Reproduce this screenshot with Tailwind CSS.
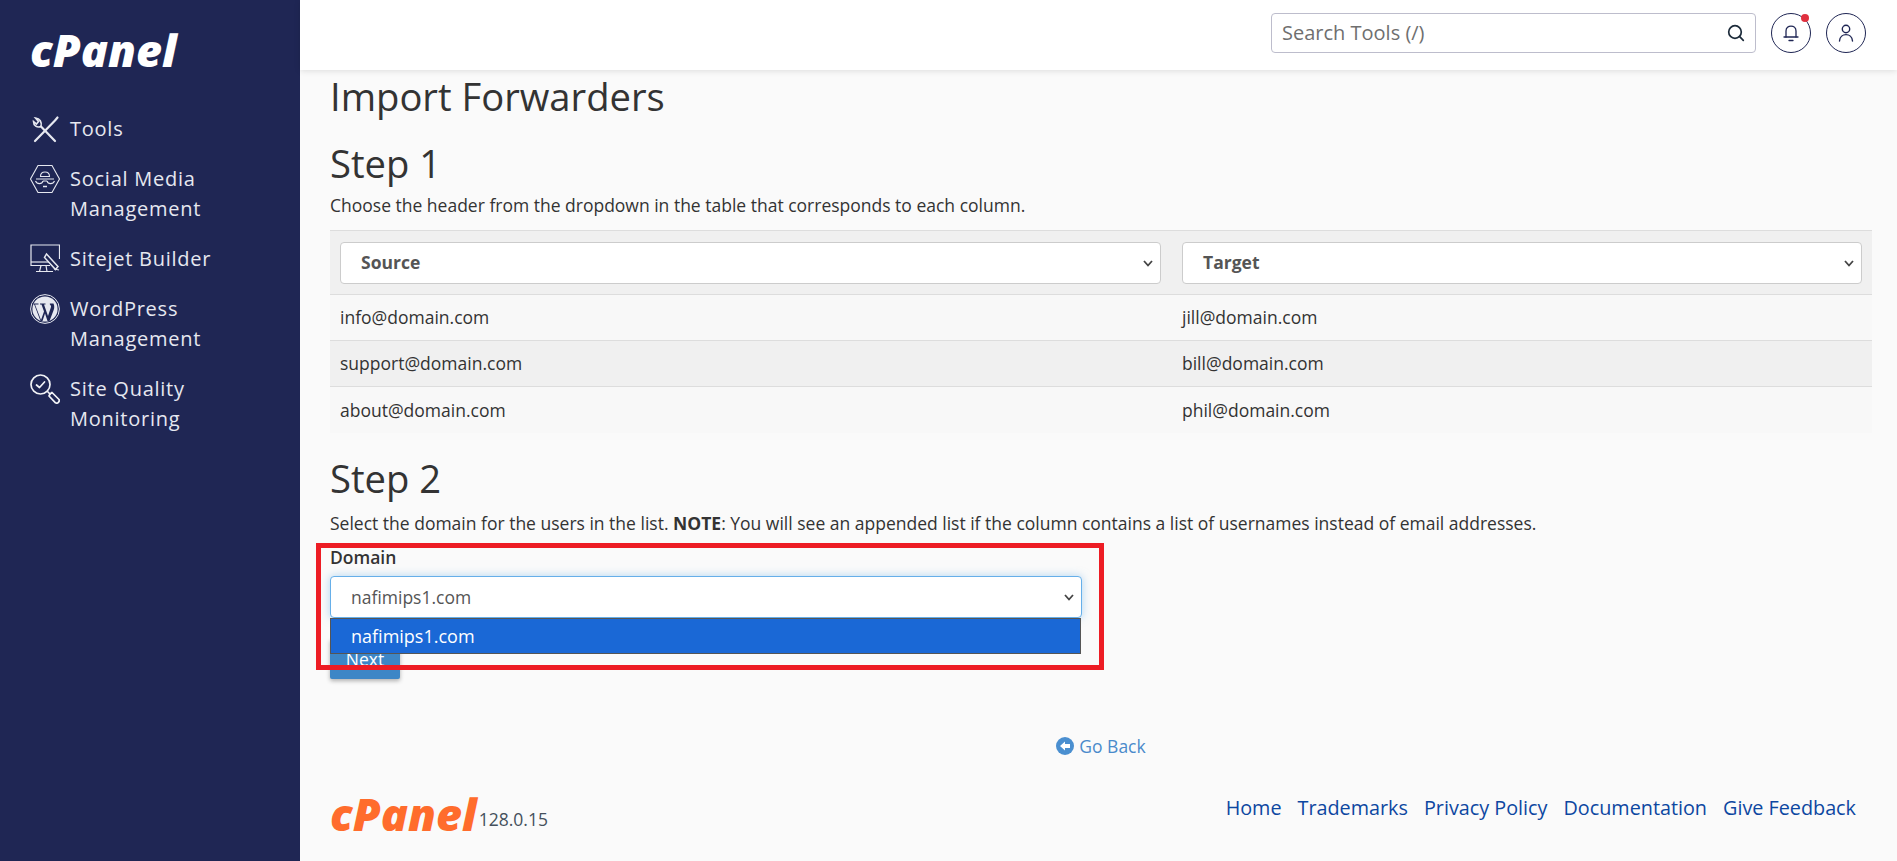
<!DOCTYPE html>
<html>

<head>
    <meta charset="utf-8">
    <title>Import Forwarders - cPanel</title>
    <script src="https://cdn.jsdelivr.net/npm/@tailwindcss/browser@4"></script>
</head>

<body class="bg-[#fafafa] text-[#333] font-['Open_Sans',sans-serif] h-[861px] overflow-hidden">

    <div class="flex h-[861px]">

        <!-- sidebar -->
        <aside class="w-[300px] shrink-0 bg-[#1f2654] text-[#e6e8f0] pl-[30px]">
            <div class="h-[30px] mt-[35px] mb-[49px] text-white font-extrabold italic text-[45px] leading-[30px] tracking-[0px]">cPanel</div>

            <nav class="flex flex-col gap-5 text-[20px] leading-[30px] tracking-[0.75px]">
                <a class="flex gap-2.5 items-start">
                    <svg class="w-[30px] h-[30px] shrink-0" viewBox="0 0 30 30" fill="none" stroke="#e6e8f0" stroke-width="2.2" stroke-linecap="round">
                        <path d="M5 27 L25 6.5 M25 6.5 L27.5 3.5" />
                        <path d="M25 27 L11 12.5" />
                        <path d="M11 12.5 C12 8 10 4.5 5.5 4 L8.5 7.5 L6.5 10 L3.5 7.5 C3.5 11.5 7 14 11 12.5Z" stroke-width="1.6" />
                    </svg>
                    <span>Tools</span>
                </a>
                <a class="flex gap-2.5 items-start">
                    <svg class="w-[30px] h-[30px] shrink-0" viewBox="0 0 30 30" fill="none" stroke="#e6e8f0" stroke-width="1.1">
                        <path d="M8 1.5 H22 L29.5 15 L22 28.5 H8 L0.5 15Z" />
                        <path d="M10.5 12.5 C10.5 6.5 19.5 6.5 19.5 12.5Z" />
                        <path d="M6 15 H24 M5.5 17 C7 20.5 12 20.5 13 17 M17 17 C18 20.5 23 20.5 24.5 17 M13 17 H17" />
                        <path d="M13 22.5 H17" stroke-width="1.5" />
                    </svg>
                    <span>Social Media<br>Management</span>
                </a>
                <a class="flex gap-2.5 items-start">
                    <svg class="w-[30px] h-[30px] shrink-0" viewBox="0 0 30 30" fill="none" stroke="#e6e8f0" stroke-width="1.2">
                        <path d="M20 21.5 H1 V1 H29.5 V15" />
                        <path d="M1 18 H19" />
                        <path d="M11 21.5 L9.5 27.5 M16 21.5 L17 27.5 M6 27.5 H23" />
                        <path d="M16.5 10 L28 22.5 L25.5 25.5 L14.5 13.5Z" stroke-width="1.5" />
                        <path d="M24 25 L29 26" />
                    </svg>
                    <span>Sitejet Builder</span>
                </a>
                <a class="flex gap-2.5 items-start">
                    <svg class="w-[30px] h-[30px] shrink-0" viewBox="0 0 30 30">
                        <circle cx="15" cy="15" r="14.4" fill="none" stroke="#e6e8f0" stroke-width="1" />
                        <circle cx="15" cy="15" r="12.6" fill="#e6e8f0" />
                        <path d="M5 10.5 L11 26 L14 17.5 L11.5 10.5 H10 V9.5 H15.5 V10.5 H14 L18 22 L21 13 C21.5 11 19 10.5 20 9.5 H23.5 C24.5 12 24.5 14 23.5 16.5 L19.5 27 H17.5 L15 19.5 L12.5 27 H10.5 L4.2 10.5 H3.5 V9.5 H8.5 V10.5Z" fill="#1f2654" />
                    </svg>
                    <span>WordPress<br>Management</span>
                </a>
                <a class="flex gap-2.5 items-start">
                    <svg class="w-[30px] h-[30px] shrink-0" viewBox="0 0 30 30" fill="none" stroke="#f2f3f7" stroke-width="1.7" stroke-linecap="round" stroke-linejoin="round">
                        <circle cx="10.5" cy="10.5" r="9.5" />
                        <path d="M6.5 11 L9.5 13.5 L14.5 8" />
                        <path d="M18 18 L20 20" />
                        <path d="M20 20 L22 18.5 L29 25.5 C30 27.5 27.5 30 25.5 28.8 L19 22Z" />
                    </svg>
                    <span>Site Quality<br>Monitoring</span>
                </a>
            </nav>
        </aside>

        <div class="flex-1 min-w-0 flex flex-col">

            <!-- top bar -->
            <header class="h-[70px] shrink-0 bg-white shadow-[0_1px_6px_rgba(0,0,0,0.12)] flex items-start pt-[13px] justify-end gap-[15px] pr-[31px] relative z-10">
                <div class="w-[485px] h-10 border border-[#bdbdcc] rounded-[4px] flex items-center justify-between pl-2.5 pr-2.5 text-[20px] text-[#6f6f6f]">
                    <span>Search Tools (/)</span>
                    <svg class="w-[18px] h-[18px]" viewBox="0 0 18 18" fill="none" stroke="#1c2b3a" stroke-width="1.7" stroke-linecap="round">
                        <circle cx="8" cy="8" r="6.3" />
                        <path d="M12.7 12.7 L16.3 16.3" />
                    </svg>
                </div>
                <div class="relative w-10 h-10 rounded-full border border-[#1f2654] flex items-center justify-center">
                    <svg class="w-4 h-[18px]" viewBox="0 0 16 18" fill="none" stroke="#1f2654" stroke-width="1.3" stroke-linecap="round">
                        <path d="M3 13 V7 C3 0.5 13 0.5 13 7 V13" />
                        <path d="M1 13 H15 M6 16.5 H10" />
                    </svg>
                    <span class="absolute top-0 right-[1px] w-2 h-2 rounded-full bg-[#e0303f]"></span>
                </div>
                <div class="w-10 h-10 rounded-full border border-[#1f2654] flex items-center justify-center">
                    <svg class="w-4 h-[18px]" viewBox="0 0 16 18" fill="none" stroke="#1f2654" stroke-width="1.4" stroke-linecap="round">
                        <circle cx="8" cy="5" r="3.7" />
                        <path d="M1.5 17 C2 8.5 14 8.5 14.5 17" />
                    </svg>
                </div>
            </header>

            <main class="flex-1 pl-[30px] pr-[25px] flex flex-col">
                <h1 class="text-[38.2px] leading-[44px] mt-[4px]">Import Forwarders</h1>

                <h2 class="text-[38.2px] leading-[44px] mt-[23px]">Step 1</h2>
                <p class="text-[17.5px] leading-6 mt-[8px] mb-[13px]">Choose the header from the dropdown in the table that corresponds to each column.</p>

                <div class="border-t border-[#ddd] text-[17.5px] text-[#333]">
                    <div class="grid grid-cols-[852px_1fr] bg-[#f0f0f0] h-[64px] border-b border-[#ddd] items-center">
                        <div class="pl-2.5 pr-[21px]">
                            <div class="h-[42px] bg-white border border-[#ccc] rounded-[4px] flex items-center justify-between pl-5 pr-[7px] font-bold text-[#555]">
                                <span>Source</span>
                                <svg class="w-2.5 h-2.5" viewBox="0 0 10 10" fill="none" stroke="#444" stroke-width="1.8"><path d="M1 3 L5 7.5 L9 3" /></svg>
                            </div>
                        </div>
                        <div class="pr-2.5">
                            <div class="h-[42px] bg-white border border-[#ccc] rounded-[4px] flex items-center justify-between pl-5 pr-[7px] font-bold text-[#555]">
                                <span>Target</span>
                                <svg class="w-2.5 h-2.5" viewBox="0 0 10 10" fill="none" stroke="#444" stroke-width="1.8"><path d="M1 3 L5 7.5 L9 3" /></svg>
                            </div>
                        </div>
                    </div>
                    <div class="grid grid-cols-[852px_1fr] bg-[#f8f8f8] h-[46px] border-b border-[#ddd] items-center">
                        <div class="pl-2.5">info@domain.com</div>
                        <div>jill@domain.com</div>
                    </div>
                    <div class="grid grid-cols-[852px_1fr] bg-[#f0f0f0] h-[46px] border-b border-[#ddd] items-center">
                        <div class="pl-2.5">support@domain.com</div>
                        <div>bill@domain.com</div>
                    </div>
                    <div class="grid grid-cols-[852px_1fr] bg-[#f8f8f8] h-[46px] items-center">
                        <div class="pl-2.5">about@domain.com</div>
                        <div>phil@domain.com</div>
                    </div>
                </div>

                <h2 class="text-[38.2px] leading-[44px] mt-[23px]">Step 2</h2>
                <p class="text-[17.5px] leading-6 mt-[11px]">Select the domain for the users in the list. <strong>NOTE</strong>: You will see an appended list if the column contains a list of usernames instead of email addresses.</p>

                <!-- domain form, with the open dropdown and the red annotation over it -->
                <div class="relative w-[752px] mt-[10px]">
                    <label class="block text-[17.5px] leading-6 font-semibold">Domain</label>
                    <div class="mt-[7px] h-[42px] bg-white border border-[#66afe9] rounded-[4px] shadow-[0_0_8px_rgba(102,175,233,0.5)] flex items-center justify-between pl-5 pr-[7px] text-[17.5px] text-[#555]">
                        <span>nafimips1.com</span>
                        <svg class="w-2.5 h-2.5" viewBox="0 0 10 10" fill="none" stroke="#444" stroke-width="1.8"><path d="M1 3 L5 7.5 L9 3" /></svg>
                    </div>
                    <button class="mt-[21px] w-[70px] h-[40px] bg-[#3d86c6] text-white text-[17.5px] rounded-b-[2px] shadow-[0_2px_4px_rgba(0,0,0,0.3)]">Next</button>

                    <div class="absolute left-0 top-[73px] w-[751px] h-[36px] bg-[#1a68d6] border border-[#555] text-white text-[18px] flex items-center pl-5">nafimips1.com</div>
                    <div class="absolute left-[-14px] top-[-2px] w-[788px] h-[127px] border-[5px] border-[#ed1c24]"></div>
                </div>

                <a class="mt-[55px] self-center flex items-center gap-[5px] text-[#4a8acb] text-[17.5px] leading-6 ml-0">
                    <svg class="w-[18px] h-[18px]" viewBox="0 0 18 18">
                        <circle cx="9" cy="9" r="9" fill="#4a8fd0" />
                        <path d="M4 9 L9 4.5 V7 H14 V11 H9 V13.5Z" fill="#fff" />
                    </svg>
                    <span>Go Back</span>
                </a>

                <footer class="mt-[38px] flex items-end justify-between pr-[16px]">
                    <div class="flex items-end gap-[2px]">
                        <span class="text-[#ff6c2c] font-extrabold italic text-[45px] leading-[31px]">cPanel</span>
                        <span class="text-[17.5px] leading-5 text-[#44505c]">128.0.15</span>
                    </div>
                    <div class="flex gap-4 text-[19.8px] leading-6 text-[#0d47a1] mb-[9px]">
                        <a>Home</a>
                        <a>Trademarks</a>
                        <a>Privacy Policy</a>
                        <a>Documentation</a>
                        <a>Give Feedback</a>
                    </div>
                </footer>
            </main>
        </div>
    </div>

</body>

</html>
